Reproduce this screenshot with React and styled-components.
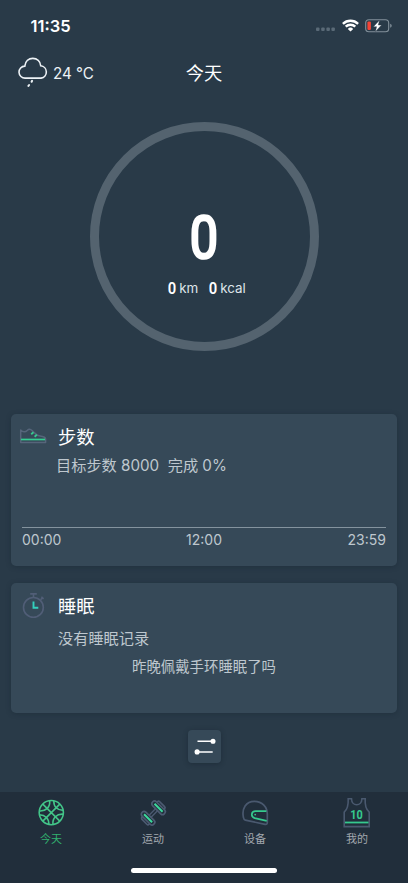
import React from 'react';
import styled, { createGlobalStyle } from 'styled-components';

const GlobalStyle = createGlobalStyle`
  *, *::before, *::after { box-sizing: border-box; }
  body {
    margin: 0;
    background: #293a48;
    font-family: Inter, "Noto Sans CJK SC", sans-serif;
    overflow: hidden;
  }
  svg { display: block; flex: none; }
`;

const Screen = styled.div`
  width: 408px;
  height: 883px;
  display: flex;
  flex-direction: column;
  background: #293a48;
  color: #fff;
`;

const StatusBar = styled.header`
  height: 51px;
  flex: none;
  display: flex;
  align-items: center;
  justify-content: space-between;
  padding: 0 16px 0 30.5px;
`;

const Clock = styled.span`
  font-size: 16.5px;
  font-weight: 600;
  line-height: 20px;
`;

const StatusIcons = styled.div`
  display: flex;
  align-items: center;
  gap: 6px;
`;

const Header = styled.div`
  height: 43px;
  flex: none;
  display: grid;
  grid-template-columns: 1fr auto 1fr;
  align-items: center;
  padding: 0 18px;
`;

const Weather = styled.div`
  display: flex;
  align-items: center;
  gap: 5px;
  color: #edf2f6;
  font-size: 15.2px;
  line-height: 20px;
  span { padding-top: 2px; }
`;

const Title = styled.h1`
  margin: 0;
  font-size: 18.3px;
  font-weight: 400;
  line-height: 26px;
`;

const Ring = styled.section`
  width: 229px;
  height: 229px;
  flex: none;
  margin: 28px auto 63px;
  border: 9px solid #54636f;
  border-radius: 50%;
  display: flex;
  flex-direction: column;
  align-items: center;
  padding-top: 77px;
`;

const StepCount = styled.strong`
  font-family: Roboto, sans-serif;
  font-size: 60px;
  font-weight: 400;
  line-height: 60px;
  -webkit-text-stroke: 2.6px #fff;
  transform: scaleX(0.84);
`;

const Totals = styled.div`
  display: flex;
  gap: 10px;
  margin-top: 10px;
  padding-left: 5px;
`;

const Total = styled.span`
  display: flex;
  gap: 3px;
  font-size: 13.4px;
  line-height: 20px;
  color: #dfe5ea;
`;

const TotalValue = styled.b`
  width: 9px;
  display: flex;
  justify-content: center;
  font-family: Roboto, sans-serif;
  font-size: 17px;
  font-weight: 600;
  color: #fff;
  span { transform: scaleX(0.87); }
`;

const Card = styled.section`
  height: ${p => p.$height}px;
  flex: none;
  margin: 0 11px ${p => p.$gap}px;
  border-radius: 5px;
  background: #364958;
  box-shadow: 0 1px 5px rgba(20, 35, 46, 0.35);
  display: flex;
  flex-direction: column;
`;

const CardHead = styled.div`
  display: flex;
  align-items: center;
  height: 46px;
  flex: none;
  padding-left: 8px;
`;

const IconSlot = styled.div`
  width: 39px;
  flex: none;
  padding-bottom: 1px;
`;

const CardTitle = styled.h2`
  margin: 0;
  font-size: 18.3px;
  font-weight: 400;
  line-height: 26px;
`;

const Detail = styled.p`
  margin: ${p => p.$top}px 0 0 ${p => p.$left}px;
  font-size: 15.2px;
  line-height: 22px;
  color: #bec7ce;
  white-space: pre;
`;

const Hint = styled.p`
  margin: 6px 0 0;
  font-size: 14.4px;
  line-height: 22px;
  text-align: center;
  color: #bec7ce;
`;

const Axis = styled.div`
  margin: auto 11px 15px 11px;
  padding-top: 1px;
  padding-bottom: 1px;
  border-top: 1px solid #84939e;
  display: grid;
  grid-template-columns: 1fr auto 1fr;
  font-size: 14px;
  line-height: 21px;
  color: #bec7ce;
  span:last-child { text-align: right; }
`;

const SortButton = styled.button`
  width: 33px;
  height: 33px;
  flex: none;
  margin: 0 auto;
  padding: 0;
  border: 0;
  border-radius: 4px;
  background: #364958;
  box-shadow: 0 1px 5px rgba(18, 32, 43, 0.45);
`;

const TabBar = styled.nav`
  height: 91px;
  flex: none;
  margin-top: auto;
  background: #212e3b;
  display: flex;
  flex-direction: column;
`;

const Tabs = styled.div`
  display: grid;
  grid-template-columns: repeat(4, 1fr);
  height: 76px;
  padding-top: 5px;
`;

const Tab = styled.div`
  display: flex;
  flex-direction: column;
  align-items: center;
  font-size: 11px;
  line-height: 16px;
  gap: 2px;
  color: ${p => (p.$active ? '#31b16f' : '#a1a8ae')};
`;

const HomeIndicator = styled.div`
  width: 146px;
  height: 5px;
  border-radius: 3px;
  background: #fff;
  margin: 0 auto;
`;

const CellularDots = () => (
  <svg width="20" height="12" viewBox="0 0 20 12" fill="#5a6a77">
    {[0, 5.2, 10.4, 15.4].map(x => <rect key={x} x={x} y="7.6" width="3.5" height="3.5" rx="1" />)}
  </svg>
);

const WifiIcon = () => (
  <svg width="17" height="13" viewBox="0 0 17 13" fill="none" stroke="#fff" strokeWidth="2.4">
    <path d="M.9 4.8a10.9 10.9 0 0 1 15.2 0M3.7 7.7a6.9 6.9 0 0 1 9.6 0" />
    <path d="M8.5 12.6 5.8 9.9a3.9 3.9 0 0 1 5.4 0z" fill="#fff" stroke="none" />
  </svg>
);

const BatteryIcon = () => (
  <svg width="27" height="14" viewBox="0 0 27 14">
    <rect x="0.7" y="0.7" width="23" height="12" rx="3.3" fill="none" stroke="#82909a" strokeWidth="1.1" />
    <path d="M25.2 4.8q1.5.4 1.5 2t-1.5 2z" fill="#82909a" />
    <rect x="2.4" y="2.4" width="3.5" height="8.6" rx="1.2" fill="#f44336" />
    <path d="M14.5 1.2 8.4 7.7h3.2l-1.2 5 6.1-6.7h-3.2z" fill="#fff" stroke="#293a48" strokeWidth=".4" />
  </svg>
);

const CloudIcon = () => (
  <svg width="30" height="32" viewBox="0 0 30 32" fill="none" stroke="#edf2f6" strokeWidth="1.6" strokeLinecap="round">
    <path d="M7.2 21.1a6 6 0 0 1-.4-12C7.3 4.2 10.7 1.4 14.8 1.4c4.3 0 7.5 3 7.9 7.4a6.2 6.2 0 0 1 .4 12.3z" />
    <path d="m14.1 23.8-.5 1m-2.5 3.200-.7.9" strokeWidth="2" />
  </svg>
);

const ShoeIcon = () => (
  <svg width="29" height="20" viewBox="0 0 29 20" fill="none" stroke="#56657a" strokeWidth="1.5" strokeLinejoin="round">
    <path d="M1.7 15.500V3c2.1 2.3 4.600 2.600 6.800.2 1.1-1.3 2.8-1.3 4.5.3l4.2 3.9c1.6 1.5 3.5 1.6 6.2 2.1 2.3.4 3.2 1.3 3.2 3v3z" />
    <path d="M2 12.500h24" stroke="#34ce91" strokeWidth="1.7" />
    <path d="m12.200 7.200 2.300-2m1.1 4.600 2.300-2" stroke="#36c98e" strokeWidth="1.8" />
  </svg>
);

const StopwatchIcon = () => (
  <svg width="29" height="27" viewBox="0 0 29 27" fill="none" stroke="#515e77" strokeWidth="1.6">
    <circle cx="14.4" cy="15.4" r="9.9" />
    <path d="M11.2 1.9h6.6M14.5 1.9v3.5m7.1 2.3 1.8-1.8m-1-1.2 2.2 2.2" />
    <path d="M14.5 9.4v6.3h4.8" stroke="#34d0bd" strokeWidth="1.9" />
  </svg>
);

const SortIcon = () => (
  <svg width="33" height="33" viewBox="0 0 33 33" fill="#fff" stroke="#fff" strokeWidth="1.5">
    <path d="M9.5 11.3H25M9 21.9h15.7" />
    <circle cx="25" cy="11.3" r="1.8" />
    <circle cx="9.1" cy="21.9" r="1.8" />
  </svg>
);

const BasketballIcon = () => (
  <svg width="32" height="32" viewBox="0 0 32 32" fill="none" stroke="#43c589" strokeWidth="1.6">
    <circle cx="16.3" cy="15.600" r="12.1" />
    <path d="m7.800 7.100 17 17M24.800 7.100l-17 17" />
    <path d="M14.600 3.700C15.500 10 10.800 14.600 4.300 14M28.300 17.200c-6.500-.6-11.200 4-10.300 10.300" />
    <path d="M18.800 3.900c-.2 5.800 3.300 9.300 9.500 9.500M4.300 17.800c6.200.2 9.700 3.700 9.500 9.500" />
  </svg>
);

const DumbbellIcon = () => (
  <svg width="32" height="32" viewBox="0 0 32 32" fill="none" stroke="#4c5b72" strokeWidth="1.7" strokeLinejoin="round">
    <g transform="translate(.3 0) rotate(-45 16 16)">
      <path d="M11.500 14.600h9M11.500 17.400h9" strokeWidth="1.3" />
      <rect x="5.900" y="7.700" width="5.400" height="16.600" rx="2.500" />
      <rect x="20.700" y="7.700" width="5.400" height="16.600" rx="2.500" />
      <path d="M5.800 11H5.100a1.600 1.600 0 0 0-1.600 1.600v6.800A1.600 1.600 0 0 0 5.100 21h.7M26.200 11h.7a1.600 1.600 0 0 1 1.600 1.600v6.800a1.600 1.600 0 0 1-1.600 1.600h-.7" />
      <path d="M8.600 10.300v11.400m14.800-11.400v11.400" stroke="#3cd79b" strokeWidth="2" />
    </g>
  </svg>
);

const HelmetIcon = () => (
  <svg width="32" height="32" viewBox="0 0 32 32" fill="none" stroke="#4a596f" strokeWidth="1.7" strokeLinejoin="round">
    <path d="M4.4 20.3C2.6 11.6 7 4.4 15.4 4.4c8 0 12.9 5.8 12.9 12.7v8.5c0 1.4-.8 2-2.2 1.7L6.3 23.2c-1-.3-1.6-1.4-1.9-2.9z" />
    <path d="M27.4 14.2H16.6c-4.5 0-5.2 5.7-.9 6.9l12 2.7" stroke="#36c98e" />
    <circle cx="16.2" cy="17.6" r=".9" fill="#36c98e" stroke="none" />
  </svg>
);

const JerseyNumber = styled.text`
  font: 700 13.500px Roboto, sans-serif;
  fill: #36c98e;
  stroke: none;
`;

const JerseyIcon = () => (
  <svg width="32" height="32" viewBox="0 0 32 32" fill="none" stroke="#4a596f" strokeWidth="1.6">
    <path d="M7.2 1.8h3.3c.1 8 10.3 8 10.4 0h3.3c-.4 7 .4 10.6 4 13.3v14.5H3.2V15.1c3.5-2.7 4.3-6.3 4-13.3z" />
    <path d="M4 25.5h23.5" stroke="#36c98e" strokeWidth="1.8" />
    <JerseyNumber x="15.5" y="21.6" textAnchor="middle" textLength="12.500" lengthAdjust="spacingAndGlyphs">10</JerseyNumber>
  </svg>
);

const tabs = [
  { label: '今天', Icon: BasketballIcon, active: true },
  { label: '运动', Icon: DumbbellIcon },
  { label: '设备', Icon: HelmetIcon },
  { label: '我的', Icon: JerseyIcon },
];

export default function App() {
  return (
    <>
      <GlobalStyle />
      <Screen>
        <StatusBar>
          <Clock>11:35</Clock>
          <StatusIcons><CellularDots /><WifiIcon /><BatteryIcon /></StatusIcons>
        </StatusBar>
        <Header>
          <Weather><CloudIcon /><span>24 °C</span></Weather>
          <Title>今天</Title>
        </Header>
        <Ring>
          <StepCount>0</StepCount>
          <Totals>
            <Total><TotalValue><span>0</span></TotalValue>km</Total>
            <Total><TotalValue><span>0</span></TotalValue>kcal</Total>
          </Totals>
        </Ring>
        <Card $height={152} $gap={17}>
          <CardHead><IconSlot><ShoeIcon /></IconSlot><CardTitle>步数</CardTitle></CardHead>
          <Detail $top={-5} $left={45}>目标步数 8000  完成 0%</Detail>
          <Axis><span>00:00</span><span>12:00</span><span>23:59</span></Axis>
        </Card>
        <Card $height={130} $gap={17}>
          <CardHead><IconSlot><StopwatchIcon /></IconSlot><CardTitle>睡眠</CardTitle></CardHead>
          <Detail $top={-1} $left={47}>没有睡眠记录</Detail>
          <Hint>昨晚佩戴手环睡眠了吗</Hint>
        </Card>
        <SortButton aria-label="排序"><SortIcon /></SortButton>
        <TabBar>
          <Tabs>
            {tabs.map(({ label, Icon, active }) => (
              <Tab key={label} $active={active}><Icon />{label}</Tab>
            ))}
          </Tabs>
          <HomeIndicator />
        </TabBar>
      </Screen>
    </>
  );
}
